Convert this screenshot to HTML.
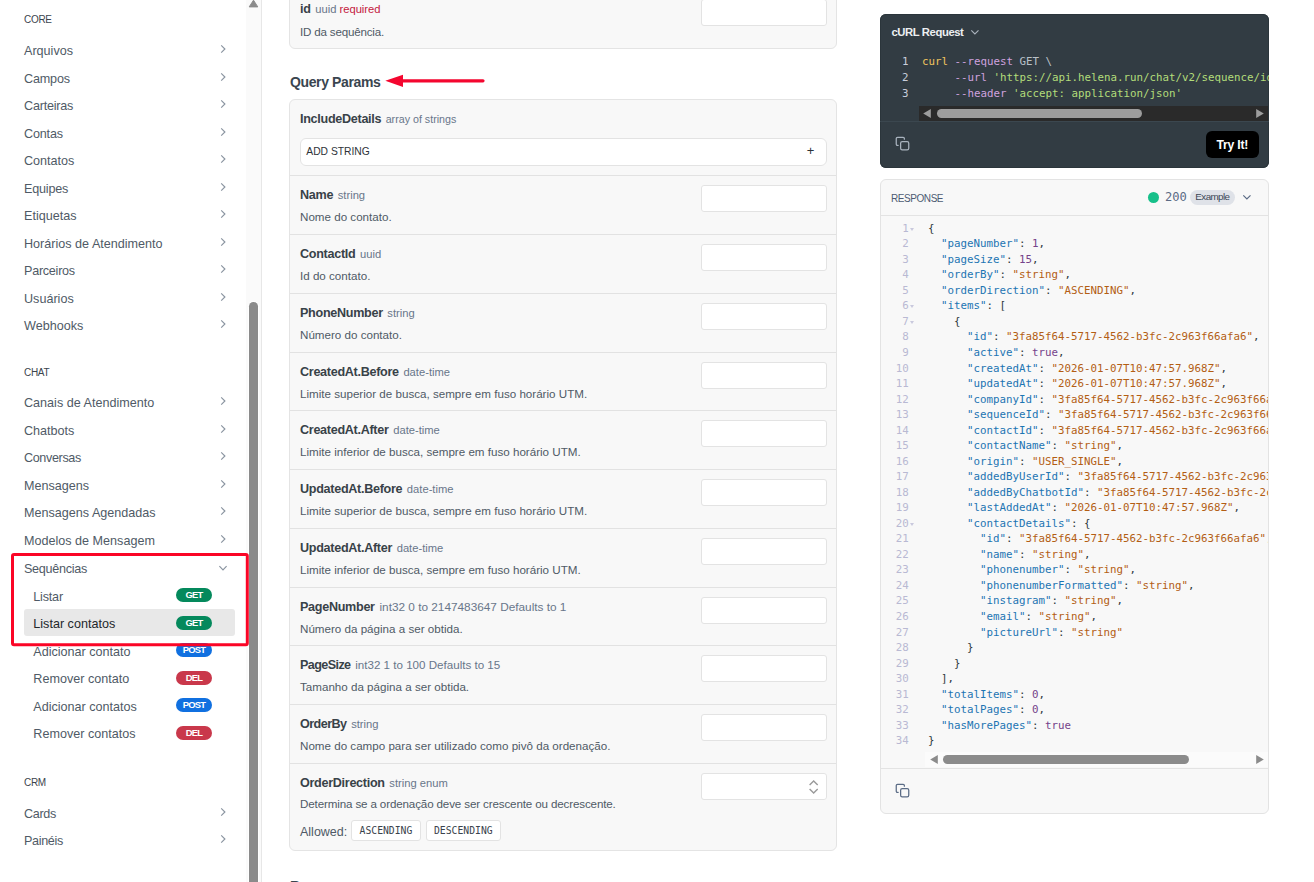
<!DOCTYPE html>
<html lang="pt-BR">
<head>
<meta charset="utf-8">
<title>Listar contatos</title>
<style>
*{box-sizing:border-box;margin:0;padding:0}
html,body{width:1314px;height:882px;overflow:hidden;background:#fff}
body{position:relative;font-family:"Liberation Sans",sans-serif;color:#4f5a66;-webkit-font-smoothing:antialiased}
.mono{font-family:"DejaVu Sans Mono","Liberation Mono",monospace}
svg{display:block}

/* ---------- sidebar ---------- */
#side{position:absolute;left:0;top:0;width:246px;height:882px;overflow:hidden}
#side h3{position:absolute;left:24px;font-size:10px;font-weight:400;letter-spacing:-.3px;color:#3b444d;line-height:12px;height:12px}
#side ul{position:absolute;left:0;width:246px;list-style:none}
#side li{position:relative;height:27.5px;line-height:27.5px;font-size:12.6px;color:#4f5a66;padding-left:24px;white-space:nowrap}
#side li.sub{padding-left:33.3px;line-height:29px}
#side li .chev{position:absolute;left:219px;top:6px}
#side li.act::before{content:"";position:absolute;left:24px;top:-1.1px;width:211px;height:26.4px;border-radius:3px;background:#e8e8e8}
#side li.act span{position:relative;color:#23272b}
.bdg{position:absolute;left:176px;top:5.3px;width:36px;height:14px;border-radius:7px;color:#fff;font-size:9.4px;font-weight:700;line-height:14.8px;text-align:center;letter-spacing:-.75px}
.get{background:#04895c}.post{background:#1070e0}.del{background:#c9384b}
#redbox{position:absolute;left:10.5px;top:553.1px}

/* sidebar scrollbar */
#sb{position:absolute;left:246px;top:0;width:16px;height:882px;background:#fafafa;border-right:1px solid #e7e7e7}
#sb .thumb{position:absolute;left:3.1px;top:301.9px;width:8.7px;height:600px;border-radius:4.35px;background:#8b8b8b;box-shadow:0 0 0 1px #fff}
#sb svg{position:absolute;left:2.4px;top:-1px}

/* ---------- main column ---------- */
.card{position:absolute;left:289px;width:548px;background:#f8f8f8;border:1px solid #e4e4e4;border-radius:6px;overflow:hidden}
.row{position:relative;height:59px;border-top:1px solid #e2e2e2}
.row.h58{height:58px}
.row .nm{position:absolute;left:10px;top:10.9px;line-height:16px;white-space:nowrap;font-size:11.2px;color:#68768a}
.row .nm b{font-size:12.6px;font-weight:700;color:#384248;letter-spacing:-.3px;margin-right:1.5px}
.row .nm i{font-style:normal;color:#c4203e}
.row .ds{position:absolute;left:10px;top:34px;line-height:14px;white-space:nowrap;font-size:11.62px;color:#4f5a66}
.row .in{position:absolute;left:411.3px;top:9px;width:125.6px;height:27px;background:#fff;border:1px solid #e3e3e3;border-radius:3px}
h2{position:absolute;left:290px;font-size:14px;font-weight:700;letter-spacing:-.38px;color:#3a454f;line-height:18px;white-space:nowrap}
.tag{position:absolute;top:55.8px;height:20.8px;background:#fff;border:1px solid #e3e3e3;border-radius:3px;font-size:9.75px;line-height:19.6px;color:#3a434c;text-align:center}

/* ---------- right column ---------- */
#curl{position:absolute;left:880px;top:13.5px;width:388.7px;height:154.2px;background:#323c43;border-radius:6px;overflow:hidden;box-shadow:inset 0 0 0 1px #2b353b}
#curl .ttl{position:absolute;left:11.5px;top:11.2px;font-size:11.3px;font-weight:700;letter-spacing:-.42px;color:#eceff1;line-height:14px;white-space:nowrap}
.code{position:absolute;font-size:10.8px}
.code div{position:relative;white-space:pre}
#curl .code{left:0;top:40.2px;line-height:16px;color:#b9c1c9}
#curl .code div{height:16px;padding-left:41.9px}
#curl .code s,#resp .code s{position:absolute;left:0;text-decoration:none;text-align:right}
#curl .code s{width:28.5px;color:#c9cedb}
.k{color:#f0c35e}.a{color:#cfa2df}.g{color:#b3dd7a}
.hsb{position:absolute;height:15px}
.hsb .th{position:absolute;top:3px;height:9px;border-radius:4.5px}
.hsb svg{position:absolute;top:3.2px}
#curl .hsb{left:38.7px;top:92.4px;width:349px;background:#2a2a2a}
#curl .foot{position:absolute;left:0;top:107.4px;width:100%;height:47px;border-top:1px solid #3b474f}
#try{position:absolute;left:326px;top:117.5px;width:52.7px;height:26.7px;border-radius:6px;background:#000;color:#fff;font-size:12.2px;font-weight:700;letter-spacing:-.2px;line-height:28.4px;text-align:center}

#resp{position:absolute;left:880px;top:179.4px;width:388.6px;height:634.6px;background:#f8f8f8;border:1px solid #e3e3e3;border-radius:6px;overflow:hidden}
#resp .hd{position:absolute;left:0;top:0;width:100%;height:36px;border-bottom:1px solid #e3e3e3}
#resp .hd .t{position:absolute;left:10.1px;top:12.5px;font-size:10px;letter-spacing:-.45px;line-height:12px;color:#4d5b73}
#resp .dot{position:absolute;left:266.9px;top:11.4px;width:11.4px;height:11.4px;border-radius:50%;background:#17c08a}
#resp .st{position:absolute;left:284px;top:9px;font-size:12.1px;line-height:16px;color:#5b6b85}
#resp .ex{position:absolute;left:309px;top:9.7px;width:44.8px;height:14.8px;border-radius:7.4px;background:#dfe2e8;color:#3c4656;font-size:9.8px;letter-spacing:-.58px;line-height:14.6px;text-align:center}
#resp .code{left:0;top:40.35px;line-height:15.54px;color:#2e383c}
#resp .code div{height:15.54px;padding-left:46.9px}
#resp .code s{width:27.8px;color:#b9b9d3}
#resp .code s em{position:absolute;left:28.6px;top:6.9px;width:0;height:0;border:2.5px solid transparent;border-top:3.8px solid #c9c9dd;border-bottom:0}
.p{color:#1d75b3}.s{color:#b35e14}.n{color:#75438a}
#resp .hsb{left:44px;top:571.7px;width:344px;background:#fbfbfb}
#resp .foot{position:absolute;left:0;top:588px;width:100%;height:46px;border-top:1px solid #e3e3e3}
.cp{position:absolute;left:13.7px}
</style>
</head>
<body>

<!-- ================= SIDEBAR ================= -->
<nav id="side">
  <h3 style="top:13.6px">CORE</h3>
  <ul style="top:38px">
    <li>Arquivos<svg class="chev" width="8" height="10" viewBox="0 0 8 10"><path d="M2.2 1.4L5.9 5 2.2 8.6" fill="none" stroke="#8a94a0" stroke-width="1.15"/></svg></li>
    <li style="letter-spacing:-0.17px">Campos<svg class="chev" width="8" height="10" viewBox="0 0 8 10"><path d="M2.2 1.4L5.9 5 2.2 8.6" fill="none" stroke="#8a94a0" stroke-width="1.15"/></svg></li>
    <li style="letter-spacing:-0.21px">Carteiras<svg class="chev" width="8" height="10" viewBox="0 0 8 10"><path d="M2.2 1.4L5.9 5 2.2 8.6" fill="none" stroke="#8a94a0" stroke-width="1.15"/></svg></li>
    <li style="letter-spacing:-0.17px">Contas<svg class="chev" width="8" height="10" viewBox="0 0 8 10"><path d="M2.2 1.4L5.9 5 2.2 8.6" fill="none" stroke="#8a94a0" stroke-width="1.15"/></svg></li>
    <li>Contatos<svg class="chev" width="8" height="10" viewBox="0 0 8 10"><path d="M2.2 1.4L5.9 5 2.2 8.6" fill="none" stroke="#8a94a0" stroke-width="1.15"/></svg></li>
    <li style="letter-spacing:-0.19px">Equipes<svg class="chev" width="8" height="10" viewBox="0 0 8 10"><path d="M2.2 1.4L5.9 5 2.2 8.6" fill="none" stroke="#8a94a0" stroke-width="1.15"/></svg></li>
    <li>Etiquetas<svg class="chev" width="8" height="10" viewBox="0 0 8 10"><path d="M2.2 1.4L5.9 5 2.2 8.6" fill="none" stroke="#8a94a0" stroke-width="1.15"/></svg></li>
    <li>Horários de Atendimento<svg class="chev" width="8" height="10" viewBox="0 0 8 10"><path d="M2.2 1.4L5.9 5 2.2 8.6" fill="none" stroke="#8a94a0" stroke-width="1.15"/></svg></li>
    <li style="letter-spacing:-0.26px">Parceiros<svg class="chev" width="8" height="10" viewBox="0 0 8 10"><path d="M2.2 1.4L5.9 5 2.2 8.6" fill="none" stroke="#8a94a0" stroke-width="1.15"/></svg></li>
    <li>Usuários<svg class="chev" width="8" height="10" viewBox="0 0 8 10"><path d="M2.2 1.4L5.9 5 2.2 8.6" fill="none" stroke="#8a94a0" stroke-width="1.15"/></svg></li>
    <li>Webhooks<svg class="chev" width="8" height="10" viewBox="0 0 8 10"><path d="M2.2 1.4L5.9 5 2.2 8.6" fill="none" stroke="#8a94a0" stroke-width="1.15"/></svg></li>
  </ul>

  <h3 style="top:367px">CHAT</h3>
  <ul style="top:390.4px">
    <li>Canais de Atendimento<svg class="chev" width="8" height="10" viewBox="0 0 8 10"><path d="M2.2 1.4L5.9 5 2.2 8.6" fill="none" stroke="#8a94a0" stroke-width="1.15"/></svg></li>
    <li>Chatbots<svg class="chev" width="8" height="10" viewBox="0 0 8 10"><path d="M2.2 1.4L5.9 5 2.2 8.6" fill="none" stroke="#8a94a0" stroke-width="1.15"/></svg></li>
    <li style="letter-spacing:-0.37px">Conversas<svg class="chev" width="8" height="10" viewBox="0 0 8 10"><path d="M2.2 1.4L5.9 5 2.2 8.6" fill="none" stroke="#8a94a0" stroke-width="1.15"/></svg></li>
    <li>Mensagens<svg class="chev" width="8" height="10" viewBox="0 0 8 10"><path d="M2.2 1.4L5.9 5 2.2 8.6" fill="none" stroke="#8a94a0" stroke-width="1.15"/></svg></li>
    <li>Mensagens Agendadas<svg class="chev" width="8" height="10" viewBox="0 0 8 10"><path d="M2.2 1.4L5.9 5 2.2 8.6" fill="none" stroke="#8a94a0" stroke-width="1.15"/></svg></li>
    <li>Modelos de Mensagem<svg class="chev" width="8" height="10" viewBox="0 0 8 10"><path d="M2.2 1.4L5.9 5 2.2 8.6" fill="none" stroke="#8a94a0" stroke-width="1.15"/></svg></li>
    <li style="letter-spacing:-0.29px;line-height:29px">Sequências<svg class="chev" style="left:217.5px;top:8.8px" width="10" height="8" viewBox="0 0 10 8"><path d="M1.4 2.2L5 5.9 8.6 2.2" fill="none" stroke="#8a94a0" stroke-width="1.15"/></svg></li>
    <li class="sub" style="letter-spacing:-0.2px">Listar<span class="bdg get">GET</span></li>
    <li class="sub act"><span>Listar contatos</span><span class="bdg get" style="position:absolute;color:#fff">GET</span></li>
    <li class="sub">Adicionar contato<span class="bdg post">POST</span></li>
    <li class="sub">Remover contato<span class="bdg del">DEL</span></li>
    <li class="sub">Adicionar contatos<span class="bdg post">POST</span></li>
    <li class="sub">Remover contatos<span class="bdg del">DEL</span></li>
  </ul>

  <h3 style="top:777px">CRM</h3>
  <ul style="top:800.6px">
    <li style="letter-spacing:-0.34px">Cards<svg class="chev" width="8" height="10" viewBox="0 0 8 10"><path d="M2.2 1.4L5.9 5 2.2 8.6" fill="none" stroke="#8a94a0" stroke-width="1.15"/></svg></li>
    <li style="letter-spacing:-0.34px">Painéis<svg class="chev" width="8" height="10" viewBox="0 0 8 10"><path d="M2.2 1.4L5.9 5 2.2 8.6" fill="none" stroke="#8a94a0" stroke-width="1.15"/></svg></li>
  </ul>
</nav>
<div id="sb">
  <svg width="11" height="9" viewBox="0 0 11 9"><path d="M5.5 1.2L9.8 7.9H1.2z" fill="#8b8b8b" stroke="#8b8b8b" stroke-width="1" stroke-linejoin="round"/></svg>
  <div class="thumb"></div>
</div>
<svg id="redbox" width="240" height="96" viewBox="0 0 240 96"><rect x="1.5" y="1.5" width="234.8" height="90.3" rx="1.5" fill="none" stroke="#fb0526" stroke-width="3"/></svg>

<!-- ================= MAIN ================= -->
<section class="card" style="top:-20px;height:69.2px;border-top-left-radius:0;border-top-right-radius:0">
  <div class="row" style="margin-top:7.2px">
    <div class="nm" style="top:12.2px"><b>id</b> uuid <i>required</i></div>
    <div class="ds" style="top:36.3px;letter-spacing:-.2px">ID da sequência.</div>
    <div class="in" style="top:10px"></div>
  </div>
</section>

<h2 style="top:73.2px">Query Params</h2>
<svg style="position:absolute;left:384px;top:72px" width="104" height="18" viewBox="0 0 104 18"><path d="M19 8.8H99" stroke="#f4062f" stroke-width="3.2" stroke-linecap="round"/><path d="M1.3 8.8L19 2.7V14.9z" fill="#f4062f"/></svg>

<section class="card" style="top:99px;height:752px">
  <div class="row" style="height:75px;border-top:0">
    <div class="nm" style="top:10.7px;font-size:10.7px"><b>IncludeDetails</b> array of strings</div>
    <div style="position:absolute;left:9.7px;top:38px;width:527.2px;height:28px;background:#fff;border:1px solid #e3e3e3;border-radius:6px;font-size:10.3px;line-height:26.6px;padding-left:5.6px;color:#2d3339">ADD STRING<span style="position:absolute;right:11.5px;top:-1px;font-size:13px">+</span></div>
  </div>
  <div class="row"><div class="nm"><b>Name</b> string</div><div class="ds">Nome do contato.</div><div class="in"></div></div>
  <div class="row"><div class="nm"><b>ContactId</b> uuid</div><div class="ds">Id do contato.</div><div class="in"></div></div>
  <div class="row"><div class="nm"><b>PhoneNumber</b> string</div><div class="ds">Número do contato.</div><div class="in"></div></div>
  <div class="row h58"><div class="nm"><b>CreatedAt.Before</b> date-time</div><div class="ds">Limite superior de busca, sempre em fuso horário UTM.</div><div class="in"></div></div>
  <div class="row"><div class="nm"><b>CreatedAt.After</b> date-time</div><div class="ds">Limite inferior de busca, sempre em fuso horário UTM.</div><div class="in"></div></div>
  <div class="row"><div class="nm"><b>UpdatedAt.Before</b> date-time</div><div class="ds">Limite superior de busca, sempre em fuso horário UTM.</div><div class="in"></div></div>
  <div class="row"><div class="nm"><b>UpdatedAt.After</b> date-time</div><div class="ds">Limite inferior de busca, sempre em fuso horário UTM.</div><div class="in"></div></div>
  <div class="row h58"><div class="nm" style="font-size:11.8px"><b>PageNumber</b> int32 0 to 2147483647 Defaults to 1</div><div class="ds">Número da página a ser obtida.</div><div class="in"></div></div>
  <div class="row"><div class="nm" style="font-size:11.6px"><b style="letter-spacing:-.6px">PageSize</b> int32 1 to 100 Defaults to 15</div><div class="ds">Tamanho da página a ser obtida.</div><div class="in"></div></div>
  <div class="row"><div class="nm"><b style="letter-spacing:-.55px">OrderBy</b> string</div><div class="ds">Nome do campo para ser utilizado como pivô da ordenação.</div><div class="in"></div></div>
  <div class="row" style="height:87px">
    <div class="nm"><b>OrderDirection</b> string enum</div>
    <div class="ds" style="top:33.4px;letter-spacing:-.14px">Determina se a ordenação deve ser crescente ou decrescente.</div>
    <div class="in"><svg style="position:absolute;left:106px;top:5.2px" width="12" height="16" viewBox="0 0 12 16"><path d="M1.6 6L5.65 1.9 9.7 6M1.6 10L5.65 14.1 9.7 10" fill="none" stroke="#9a9a9a" stroke-width="1.4"/></svg></div>
    <div style="position:absolute;left:10px;top:60px;font-size:12.5px;line-height:16px;color:#4f5a66">Allowed:</div>
    <div class="tag mono" style="left:60.8px;width:70.3px">ASCENDING</div>
    <div class="tag mono" style="left:135.6px;width:75.5px">DESCENDING</div>
  </div>
</section>

<h2 style="top:876.9px">Response</h2>

<!-- ================= RIGHT ================= -->
<section id="curl">
  <div class="ttl">cURL Request</div>
  <svg style="position:absolute;left:90.2px;top:15px" width="10" height="7" viewBox="0 0 10 7"><path d="M1.3 1.4L4.9 5 8.5 1.4" fill="none" stroke="#aab3bd" stroke-width="1.1"/></svg>
  <div class="code mono">
<div><s>1</s><span class="k">curl</span> <span class="a">--request</span> GET \</div>
<div><s>2</s>     <span class="a">--url</span> <span class="g">'https://api.helena.run/chat/v2/sequence/id/contact'</span> \</div>
<div><s>3</s>     <span class="a">--header</span> <span class="g">'accept: application/json'</span></div>
  </div>
  <div class="hsb">
    <svg style="left:4.4px" width="8" height="9" viewBox="0 0 8 9"><path d="M.2 4.5L7.8 .1v8.8z" fill="#9d9d9d"/></svg>
    <div class="th" style="left:18.3px;width:205px;background:#9d9d9d"></div>
    <svg style="left:337.3px" width="8" height="9" viewBox="0 0 8 9"><path d="M7.8 4.5L.2 .1v8.8z" fill="#9d9d9d"/></svg>
  </div>
  <div class="foot"></div>
  <svg class="cp" style="left:14.7px;top:122.7px" width="15" height="15" viewBox="0 0 24 24" fill="none" stroke="#a9b3be" stroke-width="2" stroke-linecap="round" stroke-linejoin="round"><rect x="9" y="9" width="13" height="13" rx="2.5"/><path d="M5 15H4a2 2 0 0 1-2-2V4a2 2 0 0 1 2-2h9a2 2 0 0 1 2 2v1"/></svg>
  <div id="try">Try It!</div>
</section>

<section id="resp">
  <div class="hd">
    <div class="t">RESPONSE</div>
    <div class="dot"></div>
    <div class="st mono">200</div>
    <div class="ex">Example</div>
    <svg style="position:absolute;left:360.5px;top:13.8px" width="10" height="7" viewBox="0 0 10 7"><path d="M1.3 1.4L4.9 5 8.5 1.4" fill="none" stroke="#5b6b85" stroke-width="1.2"/></svg>
  </div>
  <div class="code mono">
<div><s>1<em></em></s>{</div>
<div><s>2</s>  <span class="p">"pageNumber"</span>: <span class="n">1</span>,</div>
<div><s>3</s>  <span class="p">"pageSize"</span>: <span class="n">15</span>,</div>
<div><s>4</s>  <span class="p">"orderBy"</span>: <span class="s">"string"</span>,</div>
<div><s>5</s>  <span class="p">"orderDirection"</span>: <span class="s">"ASCENDING"</span>,</div>
<div><s>6<em></em></s>  <span class="p">"items"</span>: [</div>
<div><s>7<em></em></s>    {</div>
<div><s>8</s>      <span class="p">"id"</span>: <span class="s">"3fa85f64-5717-4562-b3fc-2c963f66afa6"</span>,</div>
<div><s>9</s>      <span class="p">"active"</span>: <span class="n">true</span>,</div>
<div><s>10</s>      <span class="p">"createdAt"</span>: <span class="s">"2026-01-07T10:47:57.968Z"</span>,</div>
<div><s>11</s>      <span class="p">"updatedAt"</span>: <span class="s">"2026-01-07T10:47:57.968Z"</span>,</div>
<div><s>12</s>      <span class="p">"companyId"</span>: <span class="s">"3fa85f64-5717-4562-b3fc-2c963f66afa6"</span>,</div>
<div><s>13</s>      <span class="p">"sequenceId"</span>: <span class="s">"3fa85f64-5717-4562-b3fc-2c963f66afa6"</span>,</div>
<div><s>14</s>      <span class="p">"contactId"</span>: <span class="s">"3fa85f64-5717-4562-b3fc-2c963f66afa6"</span>,</div>
<div><s>15</s>      <span class="p">"contactName"</span>: <span class="s">"string"</span>,</div>
<div><s>16</s>      <span class="p">"origin"</span>: <span class="s">"USER_SINGLE"</span>,</div>
<div><s>17</s>      <span class="p">"addedByUserId"</span>: <span class="s">"3fa85f64-5717-4562-b3fc-2c963f66afa6"</span>,</div>
<div><s>18</s>      <span class="p">"addedByChatbotId"</span>: <span class="s">"3fa85f64-5717-4562-b3fc-2c963f66afa6"</span>,</div>
<div><s>19</s>      <span class="p">"lastAddedAt"</span>: <span class="s">"2026-01-07T10:47:57.968Z"</span>,</div>
<div><s>20<em></em></s>      <span class="p">"contactDetails"</span>: {</div>
<div><s>21</s>        <span class="p">"id"</span>: <span class="s">"3fa85f64-5717-4562-b3fc-2c963f66afa6"</span>,</div>
<div><s>22</s>        <span class="p">"name"</span>: <span class="s">"string"</span>,</div>
<div><s>23</s>        <span class="p">"phonenumber"</span>: <span class="s">"string"</span>,</div>
<div><s>24</s>        <span class="p">"phonenumberFormatted"</span>: <span class="s">"string"</span>,</div>
<div><s>25</s>        <span class="p">"instagram"</span>: <span class="s">"string"</span>,</div>
<div><s>26</s>        <span class="p">"email"</span>: <span class="s">"string"</span>,</div>
<div><s>27</s>        <span class="p">"pictureUrl"</span>: <span class="s">"string"</span></div>
<div><s>28</s>      }</div>
<div><s>29</s>    }</div>
<div><s>30</s>  ],</div>
<div><s>31</s>  <span class="p">"totalItems"</span>: <span class="n">0</span>,</div>
<div><s>32</s>  <span class="p">"totalPages"</span>: <span class="n">0</span>,</div>
<div><s>33</s>  <span class="p">"hasMorePages"</span>: <span class="n">true</span></div>
<div><s>34</s>}</div>
  </div>
  <div class="hsb">
    <svg style="left:4.5px" width="8" height="9" viewBox="0 0 8 9"><path d="M.2 4.5L7.8 .1v8.8z" fill="#8b8b8b"/></svg>
    <div class="th" style="left:17.7px;width:246px;background:#8b8b8b"></div>
    <svg style="left:331px" width="8" height="9" viewBox="0 0 8 9"><path d="M7.8 4.5L.2 .1v8.8z" fill="#8b8b8b"/></svg>
  </div>
  <div class="foot"></div>
  <svg class="cp" style="top:602.6px" width="15" height="15" viewBox="0 0 24 24" fill="none" stroke="#5a6b85" stroke-width="2" stroke-linecap="round" stroke-linejoin="round"><rect x="9" y="9" width="13" height="13" rx="2.5"/><path d="M5 15H4a2 2 0 0 1-2-2V4a2 2 0 0 1 2-2h9a2 2 0 0 1 2 2v1"/></svg>
</section>

</body>
</html>
